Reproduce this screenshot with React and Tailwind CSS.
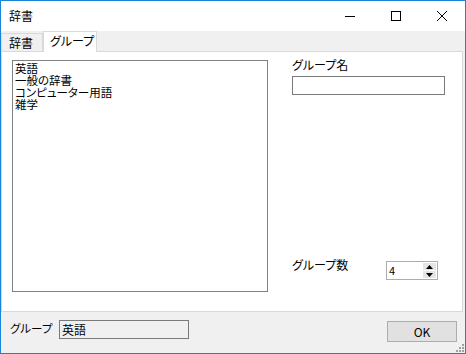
import React from 'react'

const jp = "[font-family:'Noto_Sans_CJK_JP','Noto_Sans',sans-serif] [font-feature-settings:'palt']"

function TitleBar() {
  return (
    <div className="flex h-[30px] bg-white">
      <div className="flex-1 pl-[8px] pt-[7px] text-[12px] leading-[16px] text-black">辞書</div>
      <div className="flex h-[30px] w-[46px] items-center justify-center">
        <div className="h-px w-[10px] bg-black" />
      </div>
      <div className="flex h-[30px] w-[46px] items-center justify-center">
        <div className="h-[10px] w-[10px] border border-black" />
      </div>
      <div className="flex h-[30px] w-[46px] items-center justify-center">
        <svg width="10" height="10" viewBox="0 0 10 10">
          <path d="M0 0L10 10M10 0L0 10" stroke="black" strokeWidth="1" />
        </svg>
      </div>
    </div>
  )
}

function Tabs() {
  return (
    <div className="flex h-[20px] items-end">
      <div className="flex h-[18px] w-[42px] items-center border border-b-0 border-[#d9d9d9] pl-[7px] text-[12px] leading-[14px]">
        辞書
      </div>
      <div className="relative z-10 -mb-px flex h-[21px] w-[54px] items-start border border-b-0 border-[#d9d9d9] bg-white pl-[6px] pt-[2px] text-[12px] leading-[14px]">
        グループ
      </div>
    </div>
  )
}

function SpinBox() {
  return (
    <div className="mt-[3px] flex h-[19px] w-[52px] border border-[#adadad] bg-white">
      <div className="flex-1 pl-[2px] pt-[2px] text-[11px] leading-[13px]">4</div>
      <div className="my-[1px] mr-[1px] flex w-[13px] flex-col gap-px">
        <div className="flex flex-1 items-center justify-center bg-[#e5e5e5]">
          <svg width="7" height="4" viewBox="0 0 7 4"><path d="M3.5 0L7 4H0Z" fill="black" /></svg>
        </div>
        <div className="flex flex-1 items-center justify-center bg-[#e5e5e5]">
          <svg width="7" height="4" viewBox="0 0 7 4"><path d="M0 0H7L3.5 4Z" fill="black" /></svg>
        </div>
      </div>
    </div>
  )
}

function Panel() {
  const items = ['英語', '一般の辞書', 'コンピューター用語', '雑学']
  return (
    <div className="mr-[2px] flex h-[261px] border border-[#d9d9d9] bg-white">
      <div className="ml-[10px] mt-[8px] h-[232px] w-[256px] border border-[#828282] pl-[2px] pt-px">
        {items.map((t) => (
          <div key={t} className="text-[11.5px] leading-[12px]">{t}</div>
        ))}
      </div>
      <div className="ml-[24px] flex flex-col pt-[6px]">
        <div className="text-[12px] leading-[13px]">グループ名</div>
        <div className="mt-[5px] h-[19px] w-[153px] border border-[#7a7a7a] bg-white" />
        <div className="mt-[163px] flex items-start">
          <div className="w-[94px] text-[12px] leading-[13px]">グループ数</div>
          <SpinBox />
        </div>
      </div>
    </div>
  )
}

function BottomBar() {
  return (
    <div className="relative flex flex-1 items-start pl-[9px] pt-[8px]">
      <div className="mt-[2px] w-[49px] text-[11.5px] leading-[13px]">グループ</div>
      <div className="h-[19px] w-[130px] border border-[#7a7a7a] bg-[#f0f0f0] pl-[2px] text-[12px] leading-[17px]">
        英語
      </div>
      <div className="ml-[198px] mt-px flex h-[21px] w-[70px] items-center justify-center border border-[#adadad] bg-[#e1e1e1] text-[12px]">
        OK
      </div>
      <svg className="absolute bottom-0 right-0" width="11" height="11" viewBox="0 0 11 11">
        <g fill="#a0a0a0">
          <rect x="8" y="2" width="2" height="2" />
          <rect x="5" y="5" width="2" height="2" />
          <rect x="8" y="5" width="2" height="2" />
          <rect x="2" y="8" width="2" height="2" />
          <rect x="5" y="8" width="2" height="2" />
          <rect x="8" y="8" width="2" height="2" />
        </g>
      </svg>
    </div>
  )
}

export default function App() {
  return (
    <div className={`flex h-[354px] w-[466px] flex-col border border-[#1883d7] bg-[#f0f0f0] text-black ${jp}`}>
      <TitleBar />
      <Tabs />
      <Panel />
      <BottomBar />
    </div>
  )
}
